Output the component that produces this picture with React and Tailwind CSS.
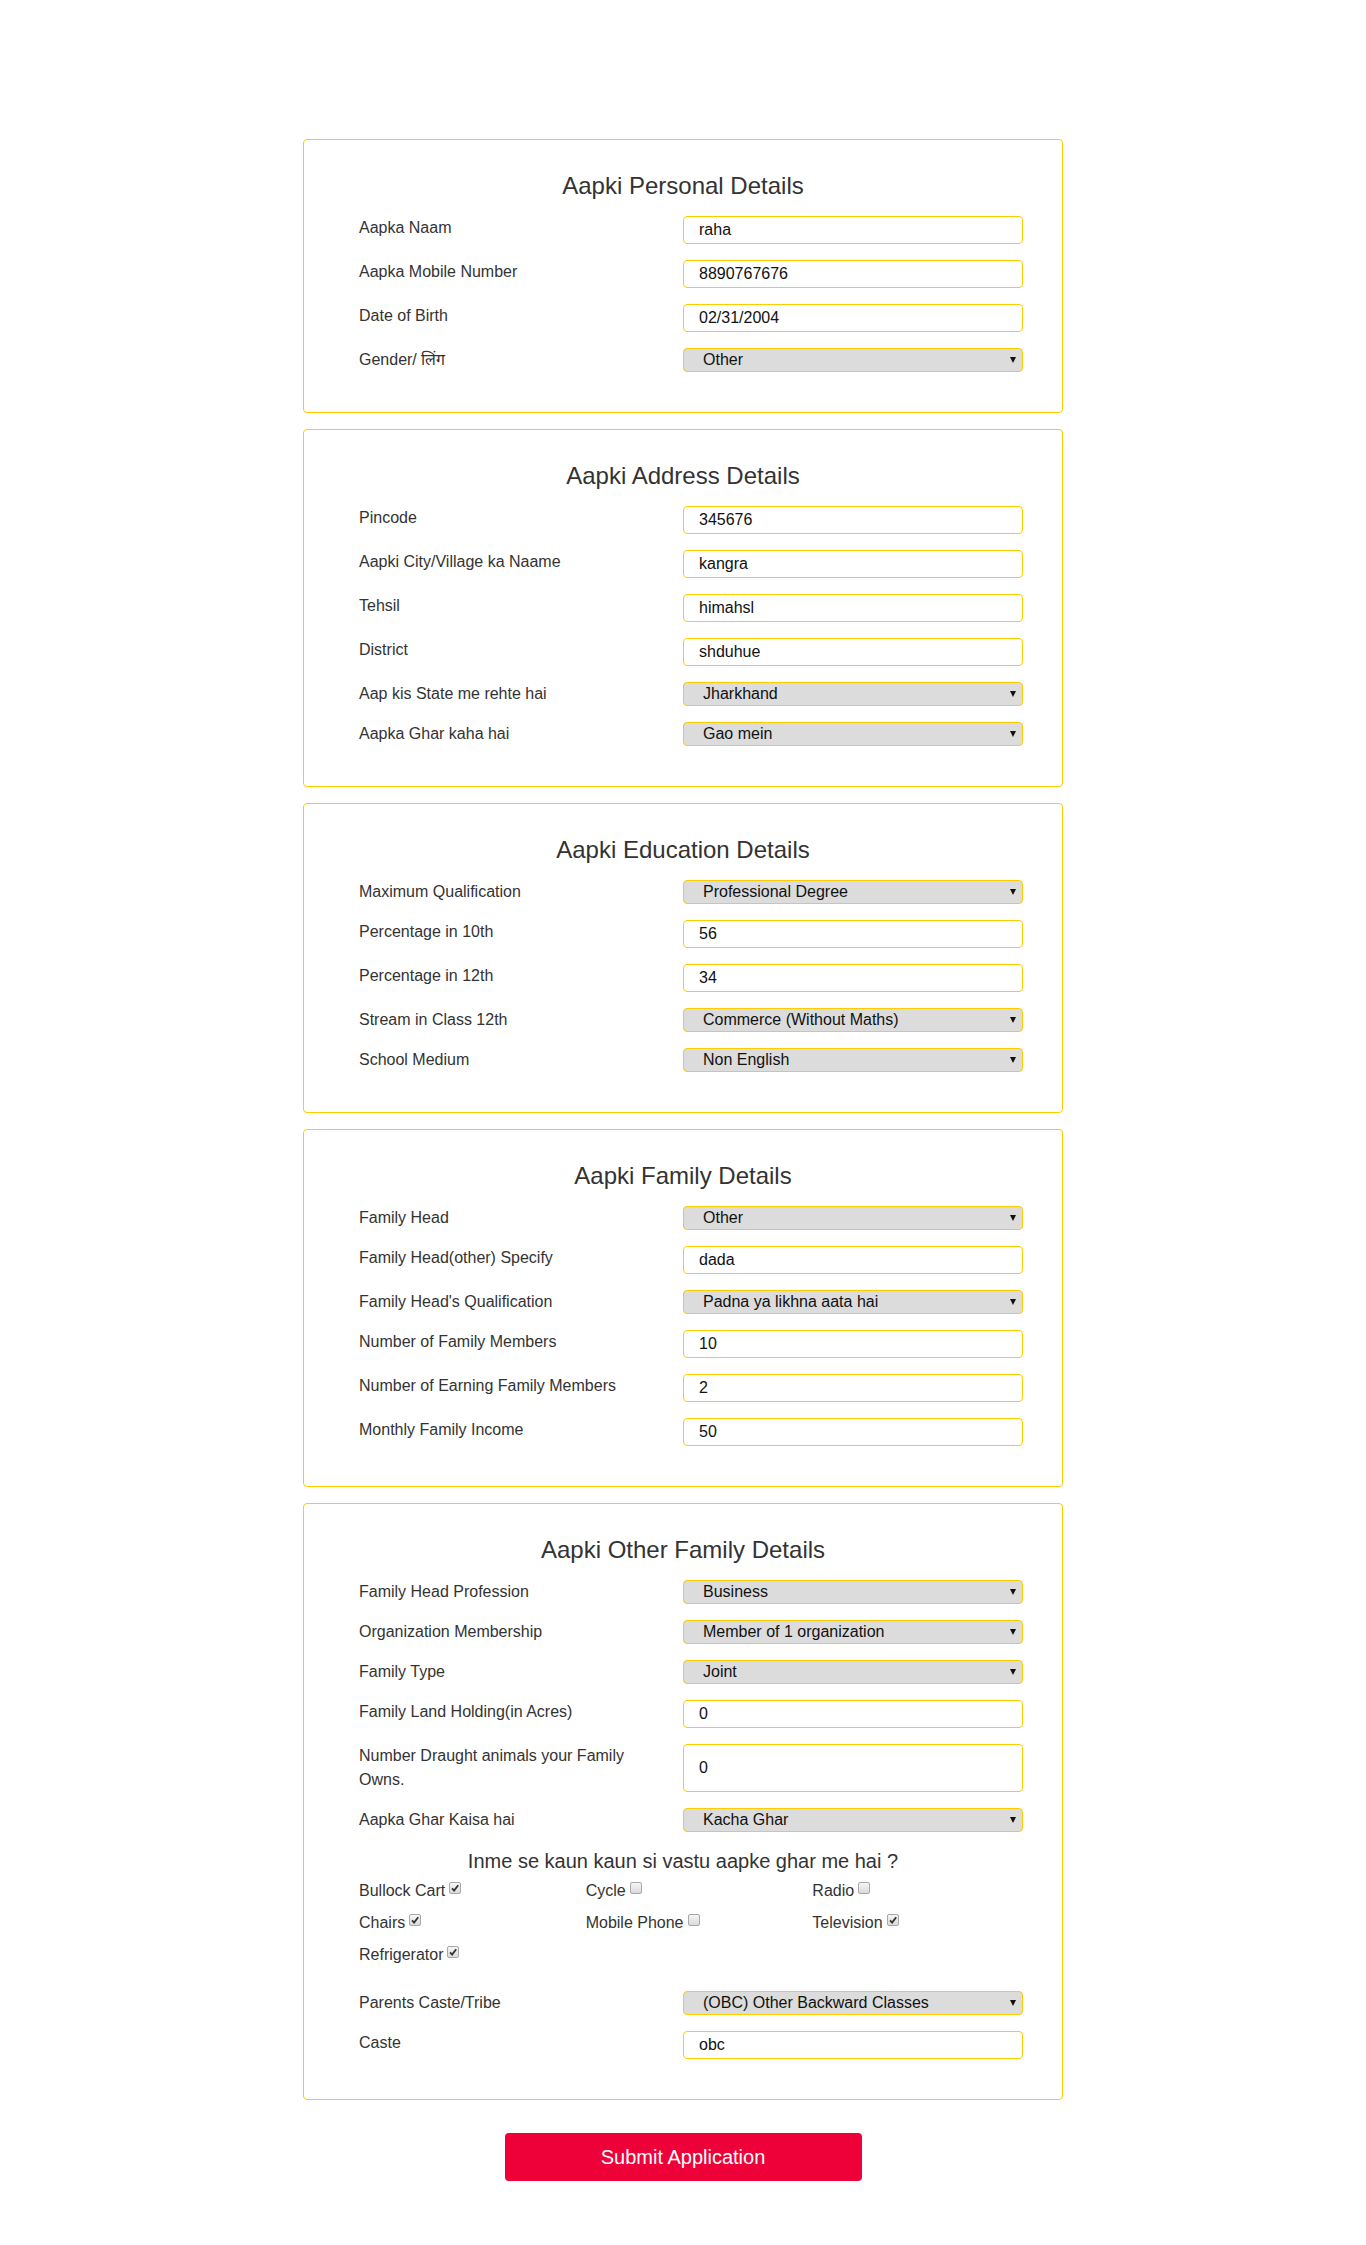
const sections = [
  {
    title: 'Aapki Personal Details',
    rows: [
      { label: 'Aapka Naam', value: 'raha' },
      { label: 'Aapka Mobile Number', value: '8890767676' },
      { label: 'Date of Birth', value: '02/31/2004' },
      { label: 'Gender/ लिंग', value: 'Other', select: true },
    ],
  },
  {
    title: 'Aapki Address Details',
    rows: [
      { label: 'Pincode', value: '345676' },
      { label: 'Aapki City/Village ka Naame', value: 'kangra' },
      { label: 'Tehsil', value: 'himahsl' },
      { label: 'District', value: 'shduhue' },
      { label: 'Aap kis State me rehte hai', value: 'Jharkhand', select: true },
      { label: 'Aapka Ghar kaha hai', value: 'Gao mein', select: true },
    ],
  },
  {
    title: 'Aapki Education Details',
    rows: [
      { label: 'Maximum Qualification', value: 'Professional Degree', select: true },
      { label: 'Percentage in 10th', value: '56' },
      { label: 'Percentage in 12th', value: '34' },
      { label: 'Stream in Class 12th', value: 'Commerce (Without Maths)', select: true },
      { label: 'School Medium', value: 'Non English', select: true },
    ],
  },
  {
    title: 'Aapki Family Details',
    rows: [
      { label: 'Family Head', value: 'Other', select: true },
      { label: 'Family Head(other) Specify', value: 'dada' },
      { label: "Family Head's Qualification", value: 'Padna ya likhna aata hai', select: true },
      { label: 'Number of Family Members', value: '10' },
      { label: 'Number of Earning Family Members', value: '2' },
      { label: 'Monthly Family Income', value: '50' },
    ],
  },
];

const otherTop = [
  { label: 'Family Head Profession', value: 'Business', select: true },
  { label: 'Organization Membership', value: 'Member of 1 organization', select: true },
  { label: 'Family Type', value: 'Joint', select: true },
  { label: 'Family Land Holding(in Acres)', value: '0' },
  { label: 'Number Draught animals your Family Owns.', value: '0' },
  { label: 'Aapka Ghar Kaisa hai', value: 'Kacha Ghar', select: true },
];

const otherBottom = [
  { label: 'Parents Caste/Tribe', value: '(OBC) Other Backward Classes', select: true },
  { label: 'Caste', value: 'obc' },
];

const items = [
  { name: 'Bullock Cart', checked: true },
  { name: 'Cycle', checked: false },
  { name: 'Radio', checked: false },
  { name: 'Chairs', checked: true },
  { name: 'Mobile Phone', checked: false },
  { name: 'Television', checked: true },
  { name: 'Refrigerator', checked: true },
];

const Row = ({ label, value, select }) => (
  <div className="grid grid-cols-2 mb-4">
    <label className="px-4 text-base leading-6 text-[#333]">{label}</label>
    {select ? (
      <div className="relative h-6 rounded border border-[#ffcc00] bg-[#dcdcdc]">
        <div className="pl-[19px] text-base leading-[22px] text-[#111]">{value}</div>
        <svg className="absolute right-[6px] top-[8px]" width="6" height="6" viewBox="0 0 6 6">
          <path d="M0 0 H6 L3 6 Z" fill="#111" />
        </svg>
      </div>
    ) : (
      <div className="flex min-h-[28px] items-center rounded border border-[#ffcc00] bg-white pl-[15px] pr-4 text-base text-[#111]">
        {value}
      </div>
    )}
  </div>
);

const Box = ({ checked }) => (
  <span className="ml-1 inline-block h-[12px] w-[12px] rounded-[2px] border border-[#a8a8a8] bg-gradient-to-b from-[#f6f6f6] to-[#dadada] align-[2px]">
    {checked && (
      <svg className="block" width="10" height="10" viewBox="0 0 10 10">
        <path d="M2 5.4 L4.1 7.6 L8.2 2.2" stroke="#333" strokeWidth="1.8" fill="none" />
      </svg>
    )}
  </span>
);

const Card = ({ title, children }) => (
  <div className="mx-auto mb-4 w-[760px] rounded border border-[#ffcc00] px-[39px] pt-8 pb-6">
    <h2 className="mb-4 text-center text-[24px] leading-[28px] text-[#333]">{title}</h2>
    {children}
  </div>
);

const App = () => {
  return (
    <div className="min-h-screen bg-white pt-[139px] pb-16 font-['Liberation_Sans',Arial,sans-serif]">
      {sections.map((s) => (
        <Card key={s.title} title={s.title}>
          {s.rows.map((r) => (
            <Row key={r.label} {...r} />
          ))}
        </Card>
      ))}

      <Card title="Aapki Other Family Details">
        {otherTop.map((r) => (
          <Row key={r.label} {...r} />
        ))}
        <h3 className="-mt-px text-center text-[20px] leading-[28px] text-[#333]">
          Inme se kaun kaun si vastu aapke ghar me hai ?
        </h3>
        <div className="mt-[4px] mb-6 grid grid-cols-3 gap-y-2">
          {items.map((it) => (
            <div key={it.name} className="px-4 text-base leading-6 text-[#333]">
              {it.name}
              <Box checked={it.checked} />
            </div>
          ))}
        </div>
        {otherBottom.map((r) => (
          <Row key={r.label} {...r} />
        ))}
      </Card>

      <div className="mt-[33px] flex justify-center">
        <button className="h-12 w-[357px] rounded bg-[#ee0038] text-[20px] text-white">
          Submit Application
        </button>
      </div>
    </div>
  );
};

export default App;
